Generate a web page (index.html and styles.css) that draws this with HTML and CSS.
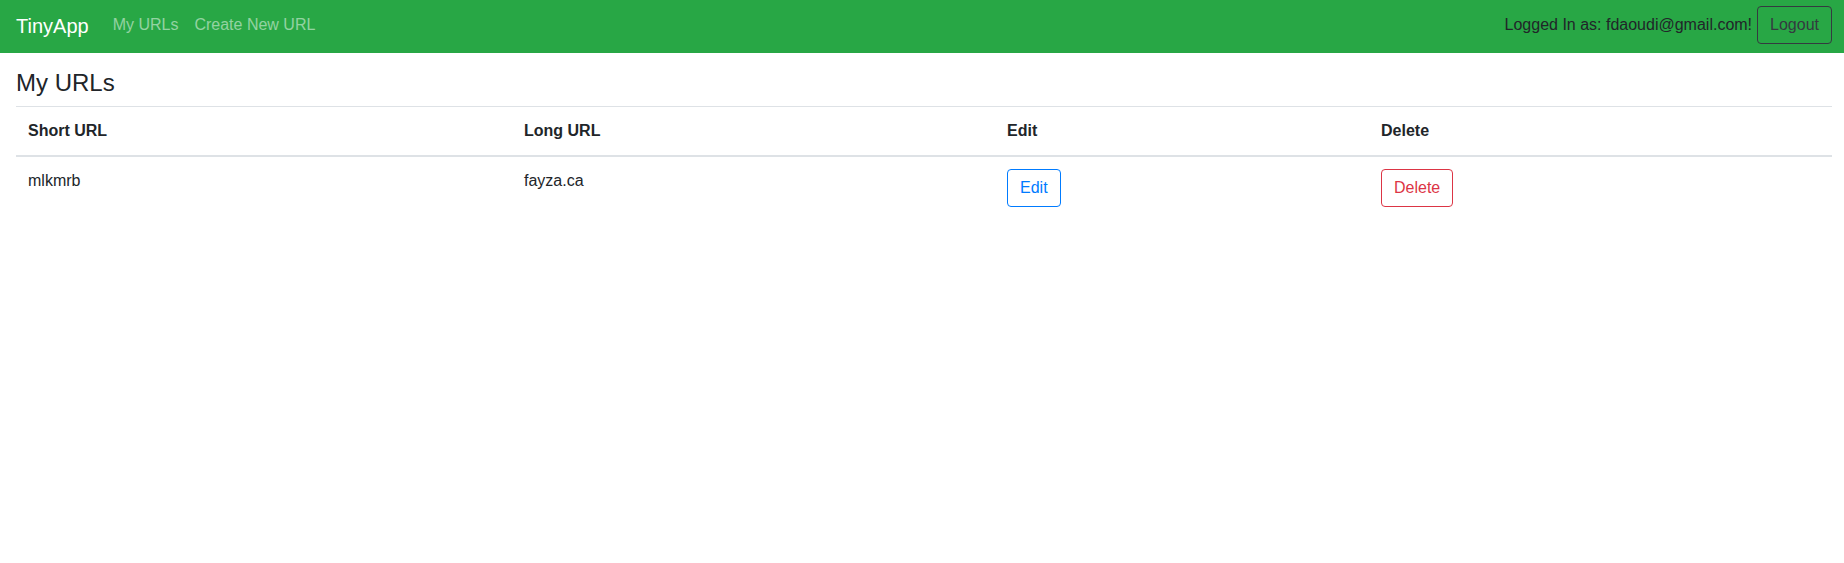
FILE: index.html
```html
<!DOCTYPE html>
<html lang="en">
<head>
<meta charset="utf-8">
<title>TinyApp</title>
<link rel="stylesheet" href="styles.css">
</head>
<body>
<nav class="navbar">
  <div class="nav-left">
    <a class="brand" href="#">TinyApp</a>
    <a class="nav-link" href="#">My URLs</a>
    <a class="nav-link" href="#">Create New URL</a>
  </div>
  <div class="nav-right">
    <span class="user">Logged In as: fdaoudi@gmail.com!</span>
    <button class="btn btn-dark-outline">Logout</button>
  </div>
</nav>
<main class="content">
  <h3 class="title">My URLs</h3>
  <table class="table">
    <thead>
      <tr>
        <th class="col-short">Short URL</th>
        <th class="col-long">Long URL</th>
        <th class="col-edit">Edit</th>
        <th class="col-delete">Delete</th>
      </tr>
    </thead>
    <tbody>
      <tr>
        <td>mlkmrb</td>
        <td>fayza.ca</td>
        <td><button class="btn btn-blue-outline">Edit</button></td>
        <td><button class="btn btn-red-outline">Delete</button></td>
      </tr>
    </tbody>
  </table>
</main>
</body>
</html>
```
FILE: styles.css
```css
* { box-sizing: border-box; }
html, body {
  margin: 0;
  padding: 0;
  background: #fff;
  font-family: "Liberation Sans", Arial, sans-serif;
  font-size: 16px;
  line-height: 1.5;
  color: #212529;
}
a { text-decoration: none; }

.navbar {
  display: flex;
  justify-content: space-between;
  align-items: center;
  background: #28a745;
  height: 53px;
  padding: 6px 12px 7px 16px;
}
.nav-left {
  display: flex;
  align-items: center;
  height: 40px;
}
.brand {
  color: #fff;
  font-size: 20px;
  line-height: 30px;
  padding: 5px 0;
  margin-right: 16px;
}
.nav-link {
  color: rgba(255, 255, 255, 0.5);
  padding: 7px 8px 9px;
  line-height: 24px;
}
.nav-right {
  display: flex;
  align-items: center;
  align-self: flex-start;
  gap: 5px;
}
.user {
  color: #212529;
  line-height: 24px;
}

.btn {
  font-family: "Liberation Sans", Arial, sans-serif;
  font-size: 16px;
  line-height: 24px;
  padding: 6px 12px;
  border: 1px solid;
  border-radius: 4px;
  background: transparent;
  cursor: pointer;
}
.btn-dark-outline { color: #343a40; border-color: #343a40; }
.btn-blue-outline { color: #007bff; border-color: #007bff; }
.btn-red-outline { color: #dc3545; border-color: #dc3545; }

.content {
  padding: 0 12px 0 16px;
}
.title {
  margin: 16px 0 8px;
  font-size: 24px;
  font-weight: 400;
  line-height: 1.2;
}
.table {
  width: 100%;
  border-collapse: collapse;
  table-layout: fixed;
}
.table th, .table td {
  padding: 12px;
  text-align: left;
  vertical-align: top;
  border-top: 1px solid #dee2e6;
}
.table th {
  font-weight: 700;
  border-bottom: 2px solid #dee2e6;
}
.col-short { width: 496px; }
.col-long { width: 483px; }
.col-edit { width: 374px; }
```
